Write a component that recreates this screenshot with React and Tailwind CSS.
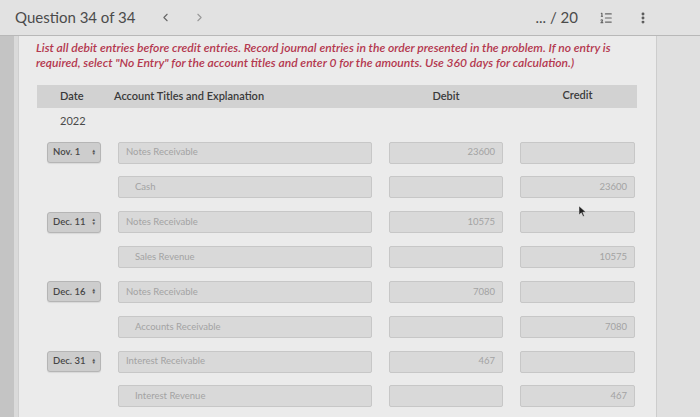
import React from 'react';
import { ChevronLeft, ChevronRight, ListOrdered, EllipsisVertical } from 'lucide-react';

const rows = [
  { date: 'Nov. 1', account: 'Notes Receivable', debit: '23600', credit: '' },
  { date: null, account: 'Cash', debit: '', credit: '23600' },
  { date: 'Dec. 11', account: 'Notes Receivable', debit: '10575', credit: '' },
  { date: null, account: 'Sales Revenue', debit: '', credit: '10575' },
  { date: 'Dec. 16', account: 'Notes Receivable', debit: '7080', credit: '' },
  { date: null, account: 'Accounts Receivable', debit: '', credit: '7080' },
  { date: 'Dec. 31', account: 'Interest Receivable', debit: '467', credit: '' },
  { date: null, account: 'Interest Revenue', debit: '', credit: '467' },
];

function DateSelect({ label }) {
  return (
    <div className="ml-[28px] w-[54px] h-[21px] flex items-center justify-between pl-[5px] pr-[4px] bg-[#cdcdcd] border border-[#b5b5b5] rounded-[3px] text-[9.5px] font-semibold text-[#464646] whitespace-nowrap shadow-[0_1px_1px_rgba(0,0,0,0.08)]">
      <span>{label}</span>
      <span className="flex flex-col leading-none text-[4.5px] text-[#555]">
        <span className="-mb-[1px]">▲</span>
        <span>▼</span>
      </span>
    </div>
  );
}

function Field({ children, className = '' }) {
  return (
    <div className={`h-[22px] flex items-center bg-[#d9d9d9] border border-[#c7c7c7] rounded-[2px] text-[9.5px] text-[#a3a3a3] whitespace-nowrap ${className}`}>
      {children}
    </div>
  );
}

export default function App() {
  return (
    <div className="w-[700px] h-[417px] overflow-hidden flex flex-col bg-[#e6e6e6] font-['Lato','Open_Sans',sans-serif] relative">
      {/* Top bar */}
      <div className="h-[36px] flex items-center bg-[#e2e2e2] border-b border-[#b8b8b8] text-[#4b4b4b]">
        <span className="ml-[15px] text-[15px]">Question 34 of 34</span>
        <ChevronLeft className="ml-[24px] w-[13px] h-[13px] text-[#666]" strokeWidth={2} />
        <ChevronRight className="ml-[21px] w-[13px] h-[13px] text-[#999]" strokeWidth={2} />
        <span className="ml-auto text-[15px] text-[#4b4b4b]">... / 20</span>
        <ListOrdered className="ml-[21px] w-[14px] h-[14px] text-[#666]" strokeWidth={2} />
        <EllipsisVertical className="ml-[23px] mr-[50px] w-[14px] h-[14px] text-[#555]" strokeWidth={3} />
      </div>

      {/* Body */}
      <div className="flex-1 flex">
        <div className="w-[14px] bg-[#c4c4c4]" />
        <div className="w-[5px] bg-[#dadada] border-r border-[#cfcfcf]" />
        <div className="w-[638px] bg-[#ebebeb] border-r border-[#cdcdcd] flex flex-col">
          <p className="pl-[17px] pt-[4px] text-[12.1px] leading-[15px] italic font-semibold text-[#b4384f] whitespace-nowrap">
            List all debit entries before credit entries. Record journal entries in the order presented in the problem. If no entry is
            <br />
            required, select "No Entry" for the account titles and enter 0 for the amounts. Use 360 days for calculation.)
          </p>

          {/* Header */}
          <div className="ml-[18px] mt-[15px] w-[600px] h-[23px] flex items-center bg-[#d2d2d2] text-[11px] font-semibold text-[#3a3a3a]">
            <span className="ml-[23px] w-[54px]">Date</span>
            <span className="w-[275px]">Account Titles and Explanation</span>
            <span className="w-[114px] text-center">Debit</span>
            <span className="ml-[17px] w-[115px] text-center -mt-[2px]">Credit</span>
          </div>

          <div className="ml-[41px] mt-[5px] text-[11px] text-[#4a4a4a]">2022</div>

          {/* Rows */}
          <div className="mt-[12px] flex flex-col gap-[12.85px]">
            {rows.map((r, i) => (
              <div key={i} className="flex items-center">
                <div className="w-[99px] flex items-center">
                  {r.date && <DateSelect label={r.date} />}
                </div>
                <Field className={`w-[254px] ${r.date ? 'pl-[7px]' : 'pl-[16px]'}`}>{r.account}</Field>
                <Field className="ml-[17px] w-[114px] justify-end pr-[7px]">{r.debit}</Field>
                <Field className="ml-[17px] w-[115px] justify-end pr-[7px]">{r.credit}</Field>
              </div>
            ))}
          </div>
        </div>
        <div className="flex-1 bg-[#e0e0e0]" />
      </div>

      {/* mouse pointer */}
      <svg className="absolute left-[579px] top-[206px]" width="8" height="11" viewBox="0 0 8 11">
        <path d="M0 0 L0 9 L2.3 6.8 L4 10.5 L5.4 9.9 L3.8 6.3 L7 6.2 Z" fill="#222" stroke="#eee" strokeWidth="0.5" />
      </svg>
    </div>
  );
}
